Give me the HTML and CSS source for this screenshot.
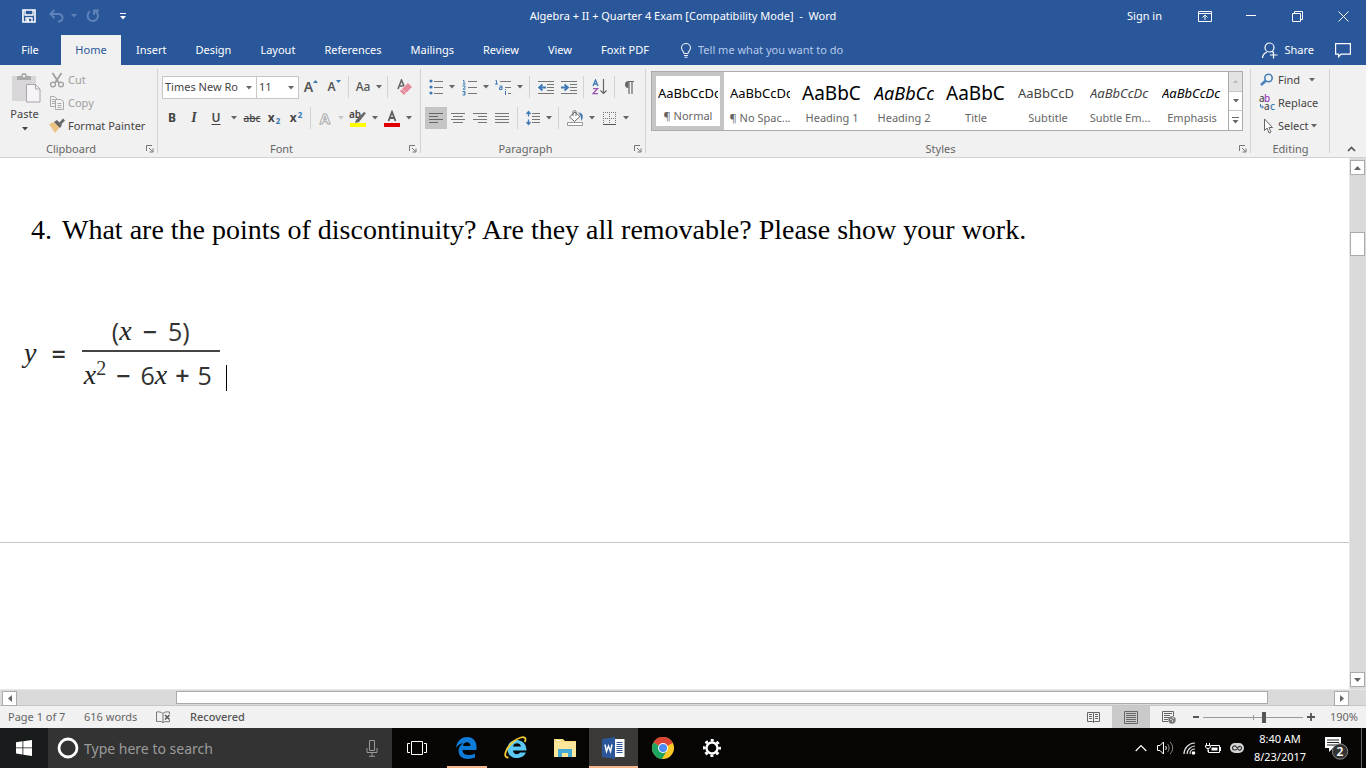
FILE: index.html
```html
<!DOCTYPE html>
<html lang="en">
<head>
<meta charset="utf-8">
<title>Algebra + II + Quarter 4 Exam - Word</title>
<link rel="stylesheet" href="styles.css">
</head>
<body>
<svg class="defs" aria-hidden="true">
  <symbol id="caret" viewBox="0 0 6 4"><path d="M0 0h6L3 3.5z" fill="currentColor"/></symbol>
  <symbol id="launch" viewBox="0 0 8 8"><path d="M.5 6V.5H6M3 3l3.500 3.500M7 3.500V7H3.500" fill="none" stroke="#777"/></symbol>
</svg>
<div class="app">
<header class="top">
  <div class="titlebar">
    <div class="quick">
      <button class="q" aria-label="Save"><svg width="14" height="14" viewBox="0 0 14 14"><path d="M1 1h12v12H1z" fill="none" stroke="#fff" stroke-width="1.600"/><path d="M3 1v5h8V1M4 13V9h6v4" fill="none" stroke="#fff" stroke-width="1.300"/><path d="M5 10h2v3H5z" fill="#fff"/></svg></button>
      <button class="q dim" aria-label="Undo"><svg width="16" height="14" viewBox="0 0 16 14"><path d="M5.500 1L1.500 5l4 4M2 5h7c6 0 6 7.500 0 7.500" fill="none" stroke="#5f82b8" stroke-width="2"/></svg></button>
      <button class="q caret-only dim" aria-label="Undo list"><svg width="6" height="4"><use href="#caret"/></svg></button>
      <button class="q redo dim" aria-label="Redo"><svg width="14" height="14" viewBox="0 0 14 14"><path d="M4 2.500A5.200 5.200 0 1 0 9.500 2.400M8 6V1.500h5" fill="none" stroke="#5f82b8" stroke-width="2"/></svg></button>
      <button class="q" aria-label="Customize toolbar"><svg width="6" height="7" viewBox="0 0 6 7"><path d="M0 .5h6" stroke="#fff"/><path d="M0 3h6L3 6.500z" fill="#fff"/></svg></button>
    </div>
    <h1 class="title">Algebra + II + Quarter 4 Exam [Compatibility Mode]&nbsp; -&nbsp; Word</h1>
    <div class="wincontrols">
      <a href="#" class="signin">Sign in</a>
      <button aria-label="Ribbon display options"><svg width="14" height="11" viewBox="0 0 14 11"><path d="M.5.5h13v10H.5zM.5 2.500h13M7 9V4.500M4.500 6.500L7 4l2.500 2.500" fill="none" stroke="#fff"/></svg></button>
      <button aria-label="Minimize"><svg width="10" height="2" viewBox="0 0 10 2"><path d="M0 .5h10" stroke="#fff"/></svg></button>
      <button aria-label="Restore"><svg width="11" height="11" viewBox="0 0 11 11"><path d="M.5 2.500h8v8h-8zM2.500 2.500v-2h8v8h-2" fill="none" stroke="#fff"/></svg></button>
      <button aria-label="Close"><svg width="11" height="11" viewBox="0 0 11 11"><path d="M.5.5l10 10M10.500.5l-10 10" stroke="#fff"/></svg></button>
    </div>
  </div>
  <nav class="tabs">
    <button class="tab file">File</button>
    <button class="tab active">Home</button>
    <button class="tab">Insert</button>
    <button class="tab">Design</button>
    <button class="tab">Layout</button>
    <button class="tab">References</button>
    <button class="tab">Mailings</button>
    <button class="tab">Review</button>
    <button class="tab">View</button>
    <button class="tab">Foxit PDF</button>
    <label class="tell"><svg width="10" height="15" viewBox="0 0 10 15"><path d="M3 10.500c0-2-2.500-3-2.500-5.500a4.500 4.500 0 0 1 9 0c0 2.500-2.500 3.500-2.500 5.500zM3 12.500h4M3.500 14.300h3" fill="none" stroke="#e6edf7" stroke-width="1.100"/></svg><input type="text" placeholder="Tell me what you want to do"></label>
    <button class="share"><svg width="16" height="17" viewBox="0 0 16 17"><circle cx="7.500" cy="5.500" r="4.500" fill="none" stroke="#fff" stroke-width="1.200"/><path d="M.5 16c.2-3 2-5 4.500-6M10 9.500l1 .7M11.500 9.500v7M8 13h7.500" fill="none" stroke="#fff" stroke-width="1.200"/></svg>Share</button>
    <button class="comment" aria-label="Comments"><svg width="16" height="15" viewBox="0 0 16 15"><path d="M.6.6h14.800v10.500H6L3.600 13.800v-2.700h-3z" fill="none" stroke="#fff" stroke-width="1.200"/></svg></button>
  </nav>
</header>

<section class="ribbon" aria-label="Ribbon">
  <div class="group clipboard">
    <div class="clip-body">
      <button class="paste"><svg width="29" height="30" viewBox="0 0 29 30"><path d="M0 3h24v25H0z" fill="#d9d6d9"/><path d="M5 7V3h4c0-4 6-4 6 0h4v4z" fill="#a9a9a9"/><circle cx="12" cy="3" r="1.300" fill="#f0f0f0"/><path d="M14.500 11.500h9l4.500 4.500v13H14.500z" fill="#f7f4f8" stroke="#aaa4ab"/><path d="M23.500 11.500V16H28" fill="none" stroke="#aaa4ab"/></svg><span>Paste</span><svg width="6" height="4"><use href="#caret"/></svg></button>
      <div class="stack">
        <button class="cmd off"><svg width="16" height="16" viewBox="0 0 16 16"><path d="M3.500 1l6.500 10M12.500 1L6 11" stroke="#a0a0a0" stroke-width="1.800"/><g fill="none" stroke="#a0a0a0" stroke-width="1.300"><circle cx="4" cy="12.500" r="2.400"/><circle cx="12" cy="12.500" r="2.400"/></g></svg>Cut</button>
        <button class="cmd off"><svg width="16" height="16" viewBox="0 0 16 16"><path d="M6 11.500H1.500v-10h4l3 3M3 4.500h3M3 6.500h3M3 8.500h3" fill="none" stroke="#aaa"/><path d="M6.500 4.500H12l2.500 2.500v7.500h-8zM8.500 8.500h4M8.500 10.500h4M8.500 12.500h4" fill="#f3f3f3" stroke="#aaa"/></svg>Copy</button>
        <button class="cmd"><svg width="16" height="16" viewBox="0 0 16 16"><path d="M0 6l5-2 6 5-5 6z" fill="#eac282"/><path d="M5 4l3-2 5 5-2 3z" fill="#666"/><path d="M10 5l4-4.500 2 2-4 4z" fill="#666"/></svg>Format Painter</button>
      </div>
    </div>
    <div class="foot"><span>Clipboard</span><button aria-label="Clipboard options"><svg width="8" height="8"><use href="#launch"/></svg></button></div>
  </div>

  <div class="group font">
    <div class="row boxes">
      <div class="combo face"><select aria-label="Font"><option>Times New Ro</option></select><svg width="6" height="4"><use href="#caret"/></svg></div>
      <div class="combo size"><select aria-label="Font size"><option>11</option></select><svg width="6" height="4"><use href="#caret"/></svg></div>
      <button class="b w24 letter" aria-label="Grow font"><span class="grow">A</span><svg width="5" height="3" viewBox="0 0 5 3"><path d="M0 3h5L2.500 0z" fill="#3f79b5"/></svg></button>
      <button class="b letter" aria-label="Shrink font"><span>A</span><svg width="5" height="3" viewBox="0 0 5 3"><path d="M0 0h5L2.500 3z" fill="#3f79b5"/></svg></button>
      <i class="sep"></i>
      <button class="b case" aria-label="Change case">Aa</button><button class="dd" aria-label="Case list"><svg width="6" height="4"><use href="#caret"/></svg></button>
      <i class="sep"></i>
      <button class="b w28" aria-label="Clear formatting"><svg width="16" height="17" viewBox="0 0 16 17"><path d="M1 10L4.500 1 7 7M2.500 7h4" fill="none" stroke="#666" stroke-width="1.600"/><path d="M3 12l8-8 4 4-8 8z" fill="#e58a9b"/><path d="M5 10l4 4" stroke="#f6ccd4"/></svg></button>
    </div>
    <div class="row">
      <button class="b bold">B</button><button class="b ital">I</button><button class="b under">U</button><button class="dd w14" aria-label="Underline list"><svg width="6" height="4"><use href="#caret"/></svg></button>
      <button class="b strike">abc</button><button class="b script">x<sub>2</sub></button><button class="b script">x<sup>2</sup></button>
      <i class="sep"></i>
      <button class="b effects">A</button><button class="dd faint" aria-label="Effects list"><svg width="6" height="4"><use href="#caret"/></svg></button>
      <button class="b w24" aria-label="Highlight"><svg class="spill" width="18" height="17" viewBox="0 0 18 17"><text x="0" y="8" class="mini">ab</text><path d="M7 10l8-8 2 1-7 9-4 1z" fill="#666"/><path d="M1 13h16v4H1z" fill="#ff0"/></svg></button><button class="dd" aria-label="Highlight list"><svg width="6" height="4"><use href="#caret"/></svg></button>
      <button class="b w24" aria-label="Font color"><svg width="16" height="17" viewBox="0 0 16 17"><path d="M4.500 11L8 2l3.500 9M5.500 8h5" fill="none" stroke="#5c5c5c" stroke-width="1.800"/><path d="M0 13h16v4H0z" fill="#e00000"/></svg></button><button class="dd" aria-label="Color list"><svg width="6" height="4"><use href="#caret"/></svg></button>
    </div>
    <div class="foot"><span>Font</span><button aria-label="Font options"><svg width="8" height="8"><use href="#launch"/></svg></button></div>
  </div>

  <div class="group para">
    <div class="row">
      <button class="b" aria-label="Bullets"><svg width="14" height="16" viewBox="0 0 14 16"><g fill="#3f79b5"><circle cx="2" cy="2" r="1.600"/><circle cx="2" cy="8" r="1.600"/><circle cx="2" cy="14" r="1.600"/></g><path d="M5 2.500h9M5 8.500h9M5 14.500h9" stroke="#777"/></svg></button><button class="dd" aria-label="Bullet list"><svg width="6" height="4"><use href="#caret"/></svg></button>
      <button class="b w24" aria-label="Numbering"><svg width="15" height="17" viewBox="0 0 15 17"><path d="M1 1.500h1V5M1 5h2.500M.5 7h2.500v1.500l-2 1.700h2.500M.5 12.500h2.500v3.500H.5M1.500 14h1.500" fill="none" stroke="#3f79b5"/><path d="M6 2.500h9M6 8.500h9M6 14.500h9" stroke="#777"/></svg></button><button class="dd" aria-label="Numbering list"><svg width="6" height="4"><use href="#caret"/></svg></button>
      <button class="b w24" aria-label="Multilevel list"><svg width="17" height="17" viewBox="0 0 17 17"><path d="M.5 1.500h1V5M0 5h3M4.500 7h2.500v3.500H4.500V8.700H7M10.500 12v4M10.500 10v1" fill="none" stroke="#3f79b5"/><path d="M5 2.500h11M10 8.500h6M13 14.500h3" stroke="#777"/></svg></button><button class="dd" aria-label="Multilevel choices"><svg width="6" height="4"><use href="#caret"/></svg></button>
      <i class="sep w9"></i>
      <button class="b w24" aria-label="Decrease indent"><svg width="16" height="13" viewBox="0 0 16 13"><path d="M0 .5h16M9 3.500h7M9 6.500h7M9 9.500h7M0 12.500h16" stroke="#777"/><path d="M8 6.500H2M4.500 3.500L1 6.500l3.500 3" fill="none" stroke="#3f79b5" stroke-width="1.800"/></svg></button>
      <button class="b" aria-label="Increase indent"><svg width="16" height="13" viewBox="0 0 16 13"><path d="M0 .5h16M9 3.500h7M9 6.500h7M9 9.500h7M0 12.500h16" stroke="#777"/><path d="M0 6.500h6M3.500 3.500L7 6.500l-3.500 3" fill="none" stroke="#3f79b5" stroke-width="1.800"/></svg></button>
      <i class="sep"></i>
      <button class="b w24" aria-label="Sort"><svg width="15" height="16" viewBox="0 0 15 16"><path d="M1 7l2.500-6L6 7M1.500 5h4" fill="none" stroke="#3f79b5" stroke-width="1.300"/><path d="M1 9.600h4.500L1 14.600h5" fill="none" stroke="#9a55ac" stroke-width="1.400"/><path d="M11.500 0v14M8.500 11.500l3 3 3-3" fill="none" stroke="#666" stroke-width="1.200"/></svg></button>
      <i class="sep"></i>
      <button class="b" aria-label="Show marks"><svg width="10" height="13" viewBox="0 0 10 13"><path d="M4.500 7a3.500 3.500 0 0 1 0-7z" fill="#666"/><path d="M4 .5h6M5 0v13M8 0v13" stroke="#666" stroke-width="1.200"/></svg></button>
    </div>
    <div class="row">
      <button class="b on" aria-label="Align left"><svg width="14" height="11" viewBox="0 0 14 11"><path d="M0 .5h14M0 3.500h9M0 6.500h14M0 9.500h9" stroke="#666"/></svg></button>
      <button class="b" aria-label="Center"><svg width="14" height="11" viewBox="0 0 14 11"><path d="M0 .5h14M2 3.500h10M0 6.500h14M2 9.500h10" stroke="#777"/></svg></button>
      <button class="b" aria-label="Align right"><svg width="14" height="11" viewBox="0 0 14 11"><path d="M0 .5h14M5 3.500h9M0 6.500h14M5 9.500h9" stroke="#777"/></svg></button>
      <button class="b" aria-label="Justify"><svg width="14" height="11" viewBox="0 0 14 11"><path d="M0 .5h14M0 3.500h14M0 6.500h14M0 9.500h14" stroke="#777"/></svg></button>
      <i class="sep w9"></i>
      <button class="b" aria-label="Line spacing"><svg width="14" height="16" viewBox="0 0 14 16"><path d="M2.500 1.500v5M.5 4l2-2.500 2 2.500M2.500 9.500v5M.5 12l2 2.500 2-2.500" fill="none" stroke="#3f79b5" stroke-width="1.300"/><path d="M6 3.500h8M6 6.500h8M6 9.500h8M6 12.500h8" stroke="#777"/></svg></button><button class="dd" aria-label="Spacing list"><svg width="6" height="4"><use href="#caret"/></svg></button>
      <i class="sep w9"></i>
      <button class="b w24" aria-label="Shading"><svg width="17" height="16" viewBox="0 0 17 16"><path d="M2.500 7L8 2l5 4.500-5.500 5z" fill="#fff" stroke="#666"/><path d="M6 6V2c0-2 3-2 3 0v4" fill="none" stroke="#666"/><path d="M11 2.500c5 0 6 4 3.500 8.500-1-2 .5-5-3.500-8.500z" fill="#3f79b5"/><path d="M.5 12.500h15v3H.5z" fill="#fff" stroke="#999"/></svg></button><button class="dd" aria-label="Shading list"><svg width="6" height="4"><use href="#caret"/></svg></button>
      <button class="b w24" aria-label="Borders"><svg width="13" height="13" viewBox="0 0 13 13"><path d="M0 .5h13M0 6.500h13M.5 0v13M6.500 0v13M12.500 0v13" stroke="#777" stroke-dasharray="1 1"/><path d="M0 12.500h13" stroke="#555"/></svg></button><button class="dd" aria-label="Border list"><svg width="6" height="4"><use href="#caret"/></svg></button>
    </div>
    <div class="foot"><span>Paragraph</span><button aria-label="Paragraph options"><svg width="8" height="8"><use href="#launch"/></svg></button></div>
  </div>

  <div class="group styles">
    <div class="gallery">
      <button class="style chosen"><span class="prev">AaBbCcDc</span><span class="name">¶ Normal</span></button>
      <button class="style"><span class="prev">AaBbCcDc</span><span class="name">¶ No Spac...</span></button>
      <button class="style"><span class="prev big">AaBbC</span><span class="name">Heading 1</span></button>
      <button class="style"><span class="prev mid">AaBbCc</span><span class="name">Heading 2</span></button>
      <button class="style"><span class="prev big">AaBbC</span><span class="name">Title</span></button>
      <button class="style"><span class="prev soft">AaBbCcD</span><span class="name">Subtitle</span></button>
      <button class="style"><span class="prev slant soft">AaBbCcDc</span><span class="name">Subtle Em...</span></button>
      <button class="style"><span class="prev slant">AaBbCcDc</span><span class="name">Emphasis</span></button>
      <div class="steps">
        <button class="disabled" aria-label="Previous styles"><svg width="5" height="3" viewBox="0 0 5 3"><path d="M0 3h5L2.500 0z" fill="#bbb"/></svg></button>
        <button aria-label="Next styles"><svg width="6" height="4"><use href="#caret"/></svg></button>
        <button aria-label="More styles"><svg width="7" height="7" viewBox="0 0 7 7"><path d="M0 .5h7" stroke="#666"/><path d="M.5 3h6l-3 3.500z" fill="#666"/></svg></button>
      </div>
    </div>
    <div class="foot"><span>Styles</span><button aria-label="Style options"><svg width="8" height="8"><use href="#launch"/></svg></button></div>
  </div>

  <div class="group editing">
    <div class="stack">
      <button class="cmd find"><svg width="14" height="14" viewBox="0 0 14 14"><circle cx="8.500" cy="5" r="3.700" fill="none" stroke="#4a80b9" stroke-width="1.600"/><path d="M6 7.500L1 12" stroke="#4a80b9" stroke-width="2.500"/></svg>Find<svg class="arrow far" width="6" height="4"><use href="#caret"/></svg></button>
      <button class="cmd"><svg class="spill" width="16" height="16" viewBox="0 0 16 16"><text x="0" y="7" class="rep">a</text><text x="5" y="7" class="rep purple">b</text><text x="5" y="15" class="rep">a</text><text x="11" y="15" class="rep blue">c</text><path d="M1.500 9v3H4M3 10.500L4.500 12 3 13.500" fill="none" stroke="#3f79b5"/></svg>Replace</button>
      <button class="cmd"><svg width="14" height="16" viewBox="0 0 14 16"><path d="M4.500 1v11.500l2.500-2.500 2 5 2-1-2-4.500h3.500z" fill="#fff" stroke="#666"/></svg>Select<svg class="arrow" width="6" height="4"><use href="#caret"/></svg></button>
    </div>
    <div class="foot"><span>Editing</span></div>
  </div>
  <button class="collapse" aria-label="Collapse ribbon"><svg width="9" height="6" viewBox="0 0 9 6"><path d="M1 5l3.500-3.500L8 5" fill="none" stroke="#555" stroke-width="1.700"/></svg></button>
</section>

<main class="workspace">
  <article class="doc">
    <div class="sheet">
      <p class="question"><span class="num">4.</span>What are the points of discontinuity? Are they all removable? Please show your work.</p>
      <div class="equation">
        <var>y</var><span class="eq">=</span>
        <div class="frac">
          <div class="top-term">(<var>x</var><span class="op">−</span>5)</div>
          <div class="bottom-term"><var>x</var><sup>2</sup><span class="op">−</span>6<var>x</var><span class="plus">+</span>5</div>
        </div>
        <i class="cursor"></i>
      </div>
    </div>
  </article>
  <div class="vscroll">
    <button aria-label="Scroll up"><svg width="7" height="4" viewBox="0 0 7 4"><path d="M0 4h7L3.500 0z" fill="#666"/></svg></button>
    <i class="before"></i><i class="thumb"></i><i class="after"></i>
    <button aria-label="Scroll down"><svg width="7" height="4" viewBox="0 0 7 4"><path d="M0 0h7L3.500 4z" fill="#666"/></svg></button>
  </div>
</main>
<div class="hscroll">
  <button aria-label="Scroll left"><svg width="4" height="7" viewBox="0 0 4 7"><path d="M4 0v7L0 3.500z" fill="#666"/></svg></button>
  <i class="before"></i><i class="thumb"></i><i class="after"></i>
  <button aria-label="Scroll right"><svg width="4" height="7" viewBox="0 0 4 7"><path d="M0 0v7l4-3.500z" fill="#666"/></svg></button>
</div>

<footer class="status">
  <span class="pages">Page 1 of 7</span><span class="words">616 words</span>
  <button class="proof" aria-label="Proofing"><svg width="15" height="13" viewBox="0 0 15 13"><path d="M7 11.500C5 10 2.500 10.500.5 10.500V1C3 .5 5 1 7 2.500v9.500M7 2.500C8.500 1 10.500.5 13.500 1v2M7 11.500l1.500-.8h5V9" fill="none" stroke="#777"/><path d="M9 4l4.500 4.500M13.500 4L9 8.500" stroke="#555" stroke-width="1.500"/></svg></button>
  <span class="recovered">Recovered</span>
  <div class="views">
    <button aria-label="Read mode"><svg width="13" height="12" viewBox="0 0 13 12"><path d="M6.500 11.500V1.500H.5v9h5l1 1 1-1h5v-9h-6M2 3.500h3M2 5.500h3M2 7.500h3M8 3.500h3M8 5.500h3M8 7.500h3" fill="none" stroke="#666"/></svg></button>
    <button class="on" aria-label="Print layout"><svg width="14" height="13" viewBox="0 0 14 13"><path d="M.5.5h13v12H.5zM2 2.500h10M2 4.500h10M2 6.500h10M2 8.500h10M2 10.500h10" fill="none" stroke="#666"/></svg></button>
    <button aria-label="Web layout"><svg width="14" height="13" viewBox="0 0 14 13"><path d="M11.500 5V.5H.5v10H6M2 2.500h8M2 4.500h6M2 6.500h5M2 8.500h4" fill="none" stroke="#666"/><circle cx="10" cy="9" r="3.700" fill="#777"/><path d="M8 8l2 1 1 2M10 6.500l2 1" stroke="#eee"/></svg></button>
  </div>
  <div class="zoom"><button aria-label="Zoom out"><svg width="6" height="2"><path d="M0 1h6" stroke="#555" stroke-width="2"/></svg></button><input type="range" aria-label="Zoom" min="0" max="100" value="61"><button aria-label="Zoom in"><svg width="8" height="8" viewBox="0 0 8 8"><path d="M0 4h8M4 0v8" stroke="#555" stroke-width="1.800"/></svg></button></div>
  <span class="percent">190%</span>
</footer>

<footer class="taskbar">
  <button class="start" aria-label="Start"><svg width="16" height="16" viewBox="0 0 16 16"><path d="M0 2.300L6.500 1.300V7.500H0zM7.300 1.200L16 0v7.500H7.300zM0 8.300h6.500v6.200L0 13.600zM7.300 8.300H16V16l-8.700-1.300z" fill="#fff"/></svg></button>
  <label class="search"><svg width="22" height="22" viewBox="0 0 22 22"><circle cx="11" cy="11" r="9" fill="none" stroke="#fff" stroke-width="2.800"/></svg><input type="text" placeholder="Type here to search"><svg width="12" height="17" viewBox="0 0 12 17"><path d="M3.500.5h5v10h-5zM1 8v4.500h10V8M6 12.500v3.500M3 16.300h6" fill="none" stroke="#999"/></svg></label>
  <button class="task" aria-label="Task view"><svg width="20" height="14" viewBox="0 0 20 14"><path d="M4.500.5h11v13h-11zM3 2.500H.5v9H3M17 2.500h2.500v9H17" fill="none" stroke="#fff"/></svg></button>
  <button class="task open" aria-label="Edge"><svg width="21" height="22" viewBox="0 0 21 22"><path d="M0 11C1 4 5 0 11 0c6.500 0 9.500 5 9.500 9.500V13H6.500c0 6 8 6 12.500 3.500v4C13 23 3 23 2.500 14 2.500 11 4 8 7.500 6 4 6.500 1.500 8.500 0 11zm7-2h7.500c0-5-7-5-7.500 0z" fill="#0f7bd8"/></svg></button>
  <button class="task" aria-label="Internet Explorer"><svg width="24" height="24" viewBox="0 0 24 24"><path d="M22.500 14.500H9c.5 4.500 5.500 4.500 7 2h6C18.500 24.500 3.500 24.500 3.500 13 3.500 1 22.500.5 22.500 14.500zM9 10.500h8c-.5-4.500-7.500-4.500-8 0z" fill="#5bc8f3"/><path d="M4.500 21.500C-2 22 2 12 9 6c5-4.500 12-6.500 12.500-3 .1 1-.2 2-.8 3" fill="none" stroke="#f2ca32" stroke-width="1.800"/></svg></button>
  <button class="task" aria-label="File Explorer"><svg width="22" height="18" viewBox="0 0 22 18"><path d="M0 0h9l2 2h11v16H0z" fill="#f7d978"/><path d="M0 3h22v15H0z" fill="#fbe69a"/><path d="M2 1.500h5" stroke="#fff"/><path d="M4 10h14v8h-4v-4H8v4H4z" fill="#42aad4"/></svg></button>
  <button class="task open current" aria-label="Word"><svg width="23" height="22" viewBox="0 0 23 22"><path d="M12 2h10.500v18H12z" fill="#fff"/><path d="M14.500 5.500h6M14.500 7.500h6M14.500 9.500h6M14.500 11.500h6M14.500 13.500h6M14.500 15.500h6" stroke="#2b579a"/><path d="M0 2l13-2v22L0 20z" fill="#2b579a"/><path d="M3 7.500l1.500 7L6.500 9l2 5.500 1.500-7" fill="none" stroke="#fff" stroke-width="1.400"/></svg></button>
  <button class="task" aria-label="Chrome"><svg width="22" height="22" viewBox="0 0 22 22"><circle cx="11" cy="11" r="11" fill="#fbc926"/><path d="M11 11L1.500 5.500A11 11 0 0 1 20.800 6z" fill="#db4437"/><path d="M11 11L1.500 5.500A11 11 0 0 0 10 22l4.500-8z" fill="#1da362"/><circle cx="11" cy="11" r="5" fill="#fff"/><circle cx="11" cy="11" r="4" fill="#4c8bf5"/></svg></button>
  <button class="task" aria-label="Settings"><svg width="18" height="18" viewBox="0 0 18 18"><circle cx="9" cy="9" r="5.500" fill="none" stroke="#fff" stroke-width="2.400"/><circle cx="9" cy="9" r="7.700" fill="none" stroke="#fff" stroke-width="2.600" stroke-dasharray="3 3.050" stroke-dashoffset="1.500"/></svg></button>
  <div class="tray">
    <button aria-label="Hidden icons"><svg width="12" height="8" viewBox="0 0 12 8"><path d="M.7 7L6 1.500 11.300 7" fill="none" stroke="#fff" stroke-width="1.200"/></svg></button>
    <button aria-label="Volume"><svg width="17" height="14" viewBox="0 0 17 14"><path d="M.5 4.500H3l3.500-3.500v12L3 9.500H.5z" fill="none" stroke="#fff"/><path d="M8.500 5c1 1 1 3 0 4" fill="none" stroke="#fff"/><path d="M10.500 3c2 2 2 6 0 8M13 1c3.500 3 3.500 9 0 12" fill="none" stroke="#888"/></svg></button>
    <button aria-label="Wireless"><svg width="13" height="13" viewBox="0 0 13 13"><g fill="none" stroke="#ddd" stroke-width="1.200"><path d="M1 12C1 6 6 1 12 1M4 12c0-4 4-8 8-8M7 12c0-3 2-5 5-5"/></g><circle cx="10.500" cy="11" r="1.800" fill="#fff"/></svg></button>
    <button aria-label="Battery"><svg width="16" height="11" viewBox="0 0 16 11"><path d="M6 2.500h8.500v7H3.500V7M15.500 4v4" fill="none" stroke="#fff"/><path d="M6.500 4.500h6v3h-6z" fill="#fff"/><path d="M1.500 0v2M4.500 0v2M.5 2.500h5c0 2.500-1 3-2.500 3S.5 5 .5 2.500zM3 5v4" fill="none" stroke="#fff"/></svg></button>
    <button aria-label="Creative Cloud"><svg width="14" height="10" viewBox="0 0 14 10"><rect width="14" height="10" rx="5" fill="#d5d5d5"/><path d="M8.500 6.500L6 3.500C4.500 2 2 3.500 2.500 5.500S6 7.500 7 6l1-1.500C9.500 2.500 12 3.500 11.500 5.500S9 7.500 8.500 6.500" fill="none" stroke="#333" stroke-width="1.100"/></svg></button>
    <time class="clock"><span>8:40 AM</span><span>8/23/2017</span></time>
    <button class="notice" aria-label="2 notifications"><svg width="26" height="26" viewBox="0 0 26 26"><path d="M1 2h16v11H9l-4 4v-4H1z" fill="#fff"/><path d="M3 5h12M3 7.500h12M3 10h9" stroke="#222"/><circle cx="16" cy="16.500" r="7.700" fill="#333" stroke="#888"/><text x="16" y="21" text-anchor="middle" class="badge">2</text></svg></button>
    <i class="peek"></i>
  </div>
</footer>
</div>
</body>
</html>
```
FILE: styles.css
```css
* { box-sizing: border-box; }
body { margin: 0; font: 11px/16px "Noto Sans", "Open Sans", sans-serif; color: #444; }
button, input, select { font: inherit; color: inherit; background: none; border: 0; padding: 0; margin: 0; border-radius: 0; outline: 0; }
button { display: flex; align-items: center; justify-content: center; flex: none; }
svg { flex: none; }
.spill { overflow: visible; }
.defs { position: absolute; width: 0; height: 0; }
.app { display: flex; flex-direction: column; height: 100vh; overflow: hidden; }

/* Title bar and tabs */
.top { background: #2a579a; color: #fff; flex: none; }
.titlebar { display: grid; grid-template-columns: 1fr auto 1fr; height: 32px; align-items: center; }
.title { margin: 0; font-size: 11px; font-weight: 400; }
.quick { display: flex; padding-left: 18px; }
.q { width: 22px; height: 22px; }
.q.dim { color: #5f82b8; width: 34px; }
.q.caret-only { width: 0; }
.q.redo { width: 38px; }
.wincontrols { display: flex; align-items: center; justify-content: flex-end; }
.wincontrols button { width: 46px; height: 32px; }
.signin { color: #fff; text-decoration: none; margin-right: 20px; }
.tabs { display: flex; height: 33px; padding-top: 3px; align-items: center; gap: 1px; }
.tab { height: 30px; padding: 0 14px; }
.tab.file { width: 60px; }
.tab.active { background: #f1f1f1; color: #2a579a; width: 60px; }
.tell { display: flex; align-items: center; gap: 7px; margin-left: 17px; flex: 1; min-width: 0; }
.tell input { flex: 1; min-width: 0; }
.tell input::placeholder { color: #b6c9ec; opacity: 1; }
.share { gap: 6px; margin-right: 20px; }
.comment { margin-right: 15px; }

/* Ribbon */
.ribbon { display: flex; flex: none; height: 93px; background: #f1f1f1; border-bottom: 1px solid #d2d2d2; }
.group { position: relative; display: flex; flex-direction: column; padding-top: 11px; flex: none; }
.group::after { content: ""; position: absolute; right: 0; top: 4px; bottom: 4px; width: 1px; background: #d2d2d2; }
.foot { display: flex; align-items: center; height: 16px; margin-top: auto; color: #666; }
.foot span { flex: 1; text-align: center; }
.foot button { width: 16px; height: 16px; }
.clipboard { width: 158px; padding-top: 3px; }
.clip-body { display: flex; }
.paste { width: 49px; flex-direction: column; justify-content: flex-start; padding-top: 5px; gap: 3px; color: #444; }
.paste > svg:first-child { margin-left: 4px; }
.paste > svg:last-child { margin-top: 2px; }
.stack { display: flex; flex-direction: column; }
.cmd { height: 23px; justify-content: flex-start; gap: 3px; white-space: nowrap; }
.cmd.off { color: #a0a0a0; }
.row { display: flex; align-items: center; height: 22px; margin-bottom: 9px; }
.font { width: 263px; }
.font .row { padding-left: 3px; }
.font .row.boxes { padding-left: 4px; }
.combo { position: relative; height: 23px; background: #fff; border: 1px solid #c6c6c6; }
.combo select { appearance: none; width: 100%; height: 21px; padding-left: 2px; }
.combo svg { position: absolute; right: 4px; top: 9px; pointer-events: none; color: #666; }
.face { width: 95px; }
.size { width: 43px; margin-left: -1px; }
.b { width: 22px; height: 22px; }
.w24 { width: 24px; }
.w28 { width: 28px; }
.dd { width: 10px; height: 22px; color: #666; }
.dd.w14 { width: 14px; }
.dd.faint { color: #c6c6c6; }
.sep { width: 7px; height: 22px; flex: none; background: linear-gradient(#d2d2d2, #d2d2d2) center / 1px 100% no-repeat; }
.sep.w9 { width: 9px; }
.letter { align-items: center; font-weight: 600; font-size: 12px; color: #555; }
.letter svg { margin-bottom: 12px; }
.grow { font-size: 14px; }
.case { font-size: 12px; font-weight: 500; color: #555; }
.bold { font-weight: 700; font-size: 12px; }
.ital { font: italic 700 14px "Liberation Serif", serif; }
.under { font-weight: 600; font-size: 12px; text-decoration: underline; text-underline-offset: 2px; }
.strike { font-size: 10px; font-weight: 500; text-decoration: line-through; }
.script { font-weight: 700; font-size: 12px; line-height: 16px; }
.script sub, .script sup { font-size: 8px; line-height: 8px; color: #3f79b5; margin-left: 1px; }
.script sub { align-self: flex-end; margin-bottom: 4px; }
.script sup { align-self: flex-start; margin-top: 4px; }
.effects { font-weight: 700; font-size: 15px; color: #fff; -webkit-text-stroke: 1px #aaa; }
.mini { font: 600 10px "Noto Sans", sans-serif; fill: #444; }
.para { width: 225px; }
.para .row { padding-left: 4px; }
.b.on { background: #c5c5c5; }
.styles { flex: 1; min-width: 0; padding: 6px 0 0; }
.gallery { display: flex; height: 60px; margin: 0 8px 0 5px; background: #fff; border: 1px solid #ababab; overflow: hidden; }
.style { flex: 1 1 0; min-width: 0; flex-direction: column; padding: 4px 2px 0; justify-content: flex-start; border: 4px solid #fff; border-width: 1px 4px; }
.style.chosen { border: 4px solid #c5c5c5; padding-top: 1px; }
.prev { width: 60px; height: 31px; line-height: 32px; overflow: hidden; white-space: nowrap; text-align: left; color: #000; font-size: 13px; }
.prev.big { font-size: 19px; }
.prev.mid { font-size: 18px; font-style: italic; }
.prev.slant { font-style: italic; }
.prev.soft { color: #444; }
.name { color: #666; white-space: nowrap; line-height: 20px; }
.steps { display: flex; flex-direction: column; width: 14px; border-left: 1px solid #ababab; flex: none; }
.steps button { flex: 1; color: #666; }
.steps button + button { border-top: 1px solid #c6c6c6; }
.steps .disabled { background: #e3e3e3; }
.editing { width: 79px; padding-top: 3px; }
.editing .stack { padding-left: 8px; }
.editing .cmd svg:first-child { width: 16px; }
.arrow { color: #666; margin-left: -1px; }
.arrow.far { margin-left: 6px; }
.collapse { width: 36px; margin-left: auto; align-self: flex-end; height: 16px; padding-left: 6px; }

/* Document */
.workspace { flex: 1; display: flex; min-height: 0; background: #fff; }
.doc { flex: 1; min-width: 0; overflow: hidden; color: #000; }
.sheet { height: 385px; border-bottom: 1px solid #c6c6c6; padding: 56px 24px 0; }
.question { margin: 0 0 0 7px; font: 28px/32px "Liberation Serif", serif; white-space: nowrap; }
.num { display: inline-block; width: 31px; }
.equation { display: flex; align-items: center; margin-top: 68px; color: #333; font: 25px/30px "Open Sans", sans-serif; }
.equation var { font: italic 28px/30px "Liberation Serif", serif; color: #222; }
.eq { margin: 0 16px 0 15px; font-weight: 600; }
.frac { width: 138px; text-align: center; }
.top-term { border-bottom: 2px solid #444; height: 38px; line-height: 36px; display: flex; justify-content: center; align-items: center; padding-bottom: 2px; }
.bottom-term { height: 40px; display: flex; align-items: center; padding: 6px 2px 0; }
.bottom-term sup { font: 20px/20px "Liberation Serif", serif; align-self: flex-start; }
.op { margin: 0 11px; font-weight: 600; }
.bottom-term .op { margin: 0 10px; }
.plus { margin: 0 8px; font-weight: 600; }
.cursor { width: 1px; height: 26px; background: #000; margin: 50px 0 0 6px; }
.vscroll, .hscroll { background: #dadada; display: flex; flex: none; }
.vscroll { width: 17px; flex-direction: column; padding: 2px 1px 2px 0; border-left: 1px solid #e8e8e8; }
.vscroll button, .hscroll button { width: 15px; height: 15px; background: #fff; border: 1px solid #ababab; }
.thumb { background: #fff; border: 1px solid #ababab; }
.vscroll .before { flex: 57; }
.vscroll .thumb { flex: 22; }
.vscroll .after { flex: 417; }
.hscroll { height: 17px; padding: 1px 17px 1px 2px; border-top: 1px solid #e8e8e8; border-bottom: 1px solid #c6c6c6; }
.hscroll .before { flex: 159; }
.hscroll .thumb { flex: 1093; }
.hscroll .after { flex: 66; }

/* Status bar */
.status { display: flex; align-items: center; height: 22px; flex: none; background: #f1f1f1; padding-left: 8px; color: #666; }
.pages { width: 76px; }
.words { width: 72px; }
.proof { width: 15px; }
.recovered { margin-left: 19px; font-weight: 500; color: #555; }
.views { display: flex; margin-left: auto; }
.views button { width: 38px; height: 22px; }
.views .on { background: #cacaca; }
.zoom { display: flex; align-items: center; gap: 4px; margin-left: 5px; }
.zoom input { appearance: none; width: 100px; height: 12px; background: linear-gradient(#999, #999) center / 100% 1px no-repeat, linear-gradient(#999, #999) center / 1px 5px no-repeat; }
.zoom input::-webkit-slider-thumb { appearance: none; width: 4px; height: 11px; background: #555; }
.percent { width: 51px; padding-right: 8px; text-align: right; }

/* Taskbar */
.taskbar { display: flex; flex: none; height: 40px; background: #060504; color: #fff; }
.start { width: 48px; background: #191c1c; }
.search { display: flex; align-items: center; width: 344px; background: #333; padding: 0 14px 0 9px; gap: 5px; flex: none; }
.search input { flex: 1; min-width: 0; font-size: 14px; height: 40px; }
.search input::placeholder { color: #9b9b9b; opacity: 1; }
.task { width: 49px; position: relative; }
.search + .task { width: 50px; }
.task.current { background: #3b3a38; }
.task.open::after { content: ""; position: absolute; left: 5px; right: 4px; bottom: 0; height: 2px; background: #f4b58c; }
.task.current::after { left: 0; right: 0; }
.tray { display: flex; align-items: center; margin-left: auto; }
.tray button { width: 24px; height: 40px; }
.clock { display: flex; flex-direction: column; align-items: center; line-height: 18px; width: 62px; }
.tray .notice { width: 50px; padding-left: 1px; }
.peek { width: 5px; height: 40px; border-left: 1px solid #666; }
.rep { font: 500 10px "Noto Sans", sans-serif; fill: #555; }
.rep.purple { fill: #9a3fc0; }
.rep.blue { fill: #3f79b5; }
.badge { font: 600 12px "Noto Sans", sans-serif; fill: #fff; }
```
